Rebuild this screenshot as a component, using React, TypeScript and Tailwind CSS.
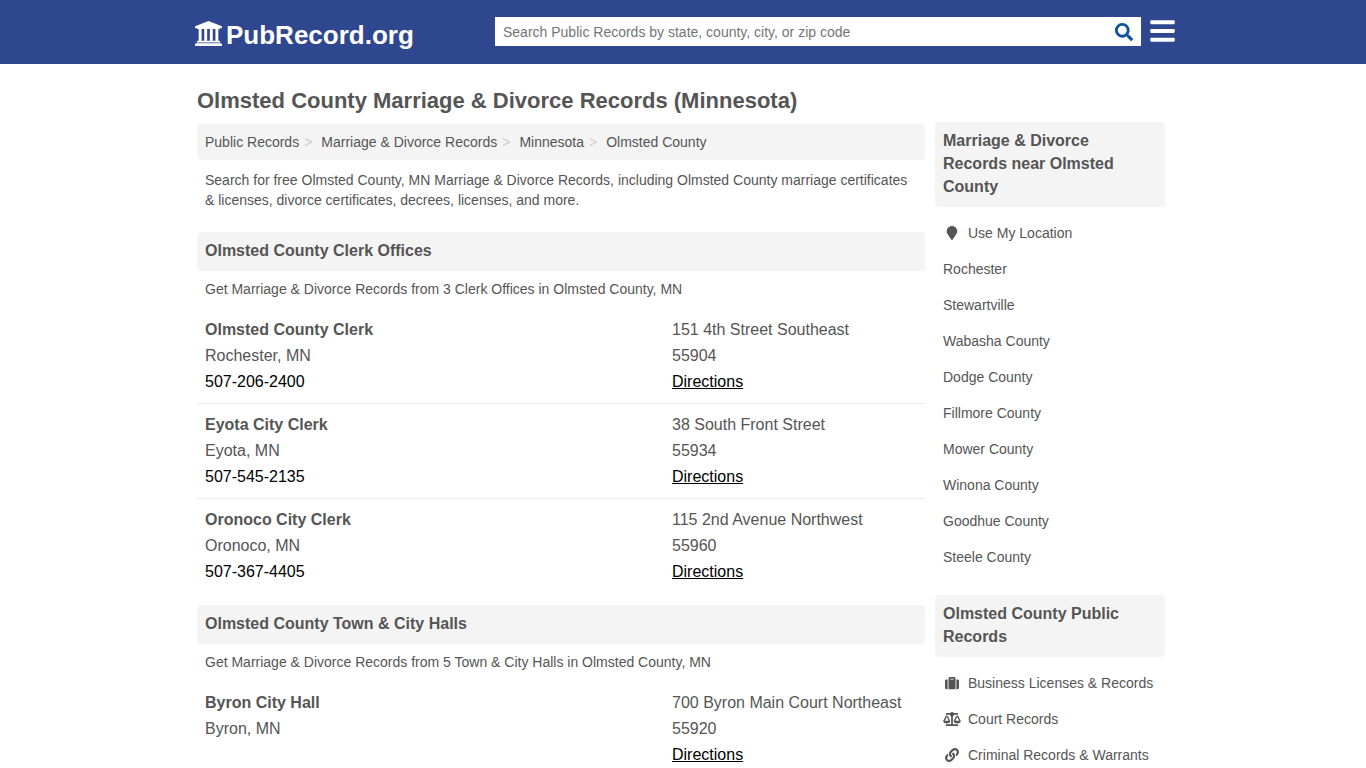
import { useState } from 'react';
import type { ComponentType } from 'react';
import { FaBalanceScale, FaBars, FaLink, FaMapMarker, FaSearch, FaSuitcase } from 'react-icons/fa';

interface Office {
  name: string;
  city: string;
  phone?: string;
  street: string;
  zip: string;
}

interface SideLink {
  label: string;
  icon?: ComponentType<{ className?: string }>;
}

function UniversityIcon({ className }: { className?: string }) {
  return (
    <svg viewBox="0 0 1920 1792" fill="currentColor" className={className} aria-hidden="true">
      <path d="M960 0l960 384v128h-128q0 26-20.5 45t-48.5 19H197q-28 0-48.5-19T128 512H0V384zM256 576h208v832h192V576h208v832h192V576h208v832h192V576h208v832h59q28 0 48.5 19t20.5 45v64H128v-64q0-26 20.5-45t48.5-19h59zM1851 1600q28 0 48.5 19t20.5 45v128H0v-128q0-26 20.5-45t48.5-19z" />
    </svg>
  );
}

const crumbs = ['Public Records', 'Marriage & Divorce Records', 'Minnesota', 'Olmsted County'];

const clerks: Office[] = [
  { name: 'Olmsted County Clerk', city: 'Rochester, MN', phone: '507-206-2400', street: '151 4th Street Southeast', zip: '55904' },
  { name: 'Eyota City Clerk', city: 'Eyota, MN', phone: '507-545-2135', street: '38 South Front Street', zip: '55934' },
  { name: 'Oronoco City Clerk', city: 'Oronoco, MN', phone: '507-367-4405', street: '115 2nd Avenue Northwest', zip: '55960' },
];

const halls: Office[] = [
  { name: 'Byron City Hall', city: 'Byron, MN', street: '700 Byron Main Court Northeast', zip: '55920' },
];

const nearby: SideLink[] = [
  { label: 'Use My Location', icon: FaMapMarker },
  { label: 'Rochester' },
  { label: 'Stewartville' },
  { label: 'Wabasha County' },
  { label: 'Dodge County' },
  { label: 'Fillmore County' },
  { label: 'Mower County' },
  { label: 'Winona County' },
  { label: 'Goodhue County' },
  { label: 'Steele County' },
];

const publicRecords: SideLink[] = [
  { label: 'Business Licenses & Records', icon: FaSuitcase },
  { label: 'Court Records', icon: FaBalanceScale },
  { label: 'Criminal Records & Warrants', icon: FaLink },
];

function Header() {
  const [query, setQuery] = useState('');

  return (
    <header className="bg-[#2e478f]">
      <div className="mx-auto flex h-16 max-w-[984px] items-center pb-px pl-1">
        <a href="#" className="flex w-[300px] shrink-0 items-center gap-1 pt-2 text-[26px] font-bold text-white">
          <UniversityIcon className="mb-1 h-[25px] w-[27px]" />
          PubRecord.org
        </a>
        <form className="flex h-[29px] flex-1 bg-white" onSubmit={(e) => e.preventDefault()}>
          <input
            type="text"
            aria-label="Search public records"
            value={query}
            onChange={(e) => setQuery(e.target.value)}
            placeholder="Search Public Records by state, county, city, or zip code"
            className="min-w-0 flex-1 px-2 pt-px text-sm text-[#555] outline-none placeholder:text-[#757575]"
          />
          <button type="submit" aria-label="Search" className="px-2 pt-px text-[#0f529c]">
            <FaSearch size={18} />
          </button>
        </form>
        <button type="button" aria-label="Menu" className="ml-[9px] pb-0.5 text-white">
          <FaBars size={28} className="w-[25px]" />
        </button>
      </div>
    </header>
  );
}

function SectionTitle({ children }: { children: string }) {
  return <h2 className="rounded bg-[#f4f4f4] px-2 pt-[7px] pb-[9px] text-base/[23px] font-bold">{children}</h2>;
}

function OfficeSection({ title, intro, offices }: { title: string; intro: string; offices: Office[] }) {
  return (
    <section className="mb-3">
      <SectionTitle>{title}</SectionTitle>
      <p className="px-2 pt-2 pb-[10px] text-sm/5">{intro}</p>
      <ul>
        {offices.map((office) => (
          <li
            key={office.name}
            className="grid grid-cols-[1fr_253px] border-b border-[#eee] py-2 pl-2 text-base/[26px] last:border-b-0"
          >
            <div>
              <h3 className="font-bold">{office.name}</h3>
              <p>{office.city}</p>
              {office.phone && (
                <a href="#" className="text-black">{office.phone}</a>
              )}
            </div>
            <div>
              <p>{office.street}</p>
              <p>{office.zip}</p>
              <a href="#" className="text-black underline">Directions</a>
            </div>
          </li>
        ))}
      </ul>
    </section>
  );
}

function SideSection({ title, links }: { title: string; links: SideLink[] }) {
  return (
    <section className="mb-5">
      <SectionTitle>{title}</SectionTitle>
      <ul className="pt-2">
        {links.map(({ label, icon: Icon }) => (
          <li key={label}>
            <a href="#" className="flex h-9 items-center px-2 text-sm">
              {Icon && <Icon className="mr-[7px] h-[14px] w-[18px]" />}
              {label}
            </a>
          </li>
        ))}
      </ul>
    </section>
  );
}

export default function App() {
  return (
    <div className="min-h-screen bg-white font-['Liberation_Sans',Arial,sans-serif] text-[#555]">
      <Header />
      <div className="mx-auto flex max-w-[972px] gap-[10px] pr-1">
        <main className="min-w-0 flex-1">
          <h1 className="pt-[22px] pb-2 text-[22px]/[30px] font-bold">
            Olmsted County Marriage &amp; Divorce Records (Minnesota)
          </h1>
          <nav aria-label="Breadcrumb" className="rounded bg-[#f4f4f4] px-2">
            <ol className="flex h-9 items-center text-sm">
              {crumbs.map((crumb, i) => (
                <li key={crumb} className="flex">
                  <a href="#">{crumb}</a>
                  {i < crumbs.length - 1 && <span className="mr-[9px] ml-[5px] text-[#ccc]">&gt;</span>}
                </li>
              ))}
            </ol>
          </nav>
          <p className="px-2 pt-[10px] pb-[22px] text-sm/5">
            Search for free Olmsted County, MN Marriage &amp; Divorce Records, including Olmsted County marriage
            certificates &amp; licenses, divorce certificates, decrees, licenses, and more.
          </p>
          <OfficeSection
            title="Olmsted County Clerk Offices"
            intro="Get Marriage & Divorce Records from 3 Clerk Offices in Olmsted County, MN"
            offices={clerks}
          />
          <OfficeSection
            title="Olmsted County Town & City Halls"
            intro="Get Marriage & Divorce Records from 5 Town & City Halls in Olmsted County, MN"
            offices={halls}
          />
        </main>
        <aside className="w-[230px] shrink-0 pt-[58px]">
          <SideSection title="Marriage & Divorce Records near Olmsted County" links={nearby} />
          <SideSection title="Olmsted County Public Records" links={publicRecords} />
        </aside>
      </div>
    </div>
  );
}
